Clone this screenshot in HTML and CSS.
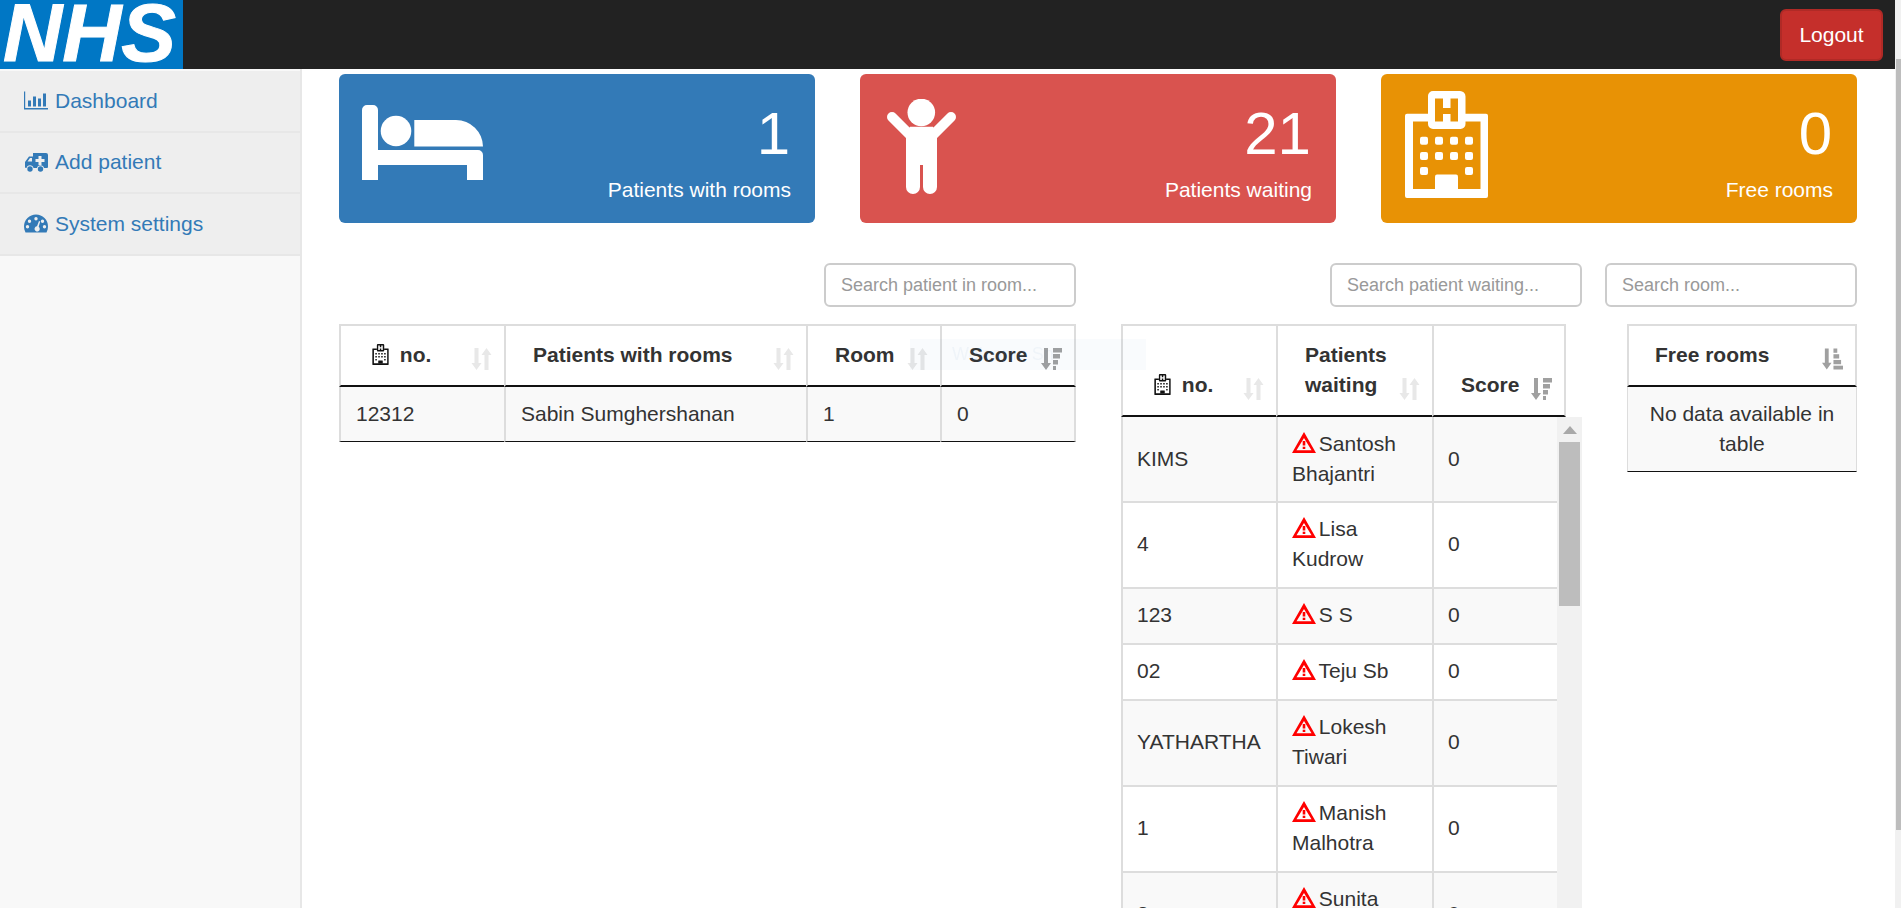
FILE: index.html
```html
<!DOCTYPE html>
<html lang="en">
<head>
    <meta charset="UTF-8">
    <title>NHS Dashboard</title>
    <link rel="stylesheet" href="styles.css">
</head>
<body>
    <svg class="defs" width="0" height="0">
        <symbol id="hospital" viewBox="0 0 83 107">
            <path d="M2 22.7H23V30.5H8V98H75.5V30.5H60V22.7H81a2 2 0 0 1 2 2V105a2 2 0 0 1-2 2H2a2 2 0 0 1-2-2V24.7a2 2 0 0 1 2-2Z"/>
            <path fill-rule="evenodd" d="M28 0H55a5.5 5.5 0 0 1 5.5 5.5V33a5 5 0 0 1-5 5H28a5 5 0 0 1-5-5V5a5 5 0 0 1 5-5ZM30 7.5V30.5H38V23H45.5V30.5H53V7.5H45.5V17H38V7.5Z"/>
            <rect x="30" y="83.6" width="23" height="16" rx="2"/>
            <rect x="15" y="45.7" width="8" height="8" rx="2"/><rect x="30" y="45.7" width="8" height="8" rx="2"/><rect x="45" y="45.7" width="8" height="8" rx="2"/><rect x="60" y="45.7" width="8" height="8" rx="2"/>
            <rect x="15" y="61" width="8" height="8" rx="2"/><rect x="30" y="61" width="8" height="8" rx="2"/><rect x="45" y="61" width="8" height="8" rx="2"/><rect x="60" y="61" width="8" height="8" rx="2"/>
            <rect x="15" y="76" width="8" height="8" rx="2"/><rect x="60" y="76" width="8" height="8" rx="2"/>
        </symbol>
        <symbol id="sort" viewBox="0 0 20 22">
            <path d="M3 0H7V15H10L5 22L0 15H3ZM15 0L20 7H17V22H13V7H10Z"/>
        </symbol>
        <symbol id="sort-desc" viewBox="0 0 21 22">
            <path d="M3 0H7V15H10L5 22L0 15H3Z"/>
            <rect x="12" y="0" width="9" height="4.500"/><rect x="12" y="6" width="7" height="4.500"/><rect x="12" y="12" width="5" height="4.500"/><rect x="12" y="18" width="3" height="4"/>
        </symbol>
        <symbol id="sort-asc" viewBox="0 0 22 22">
            <path d="M3 0H7V15H10L5 22L0 15H3Z"/>
            <rect x="12" y="0" width="4" height="4.500"/><rect x="12" y="6" width="6" height="4.500"/><rect x="12" y="12" width="8" height="4.500"/><rect x="12" y="18" width="10" height="4"/>
        </symbol>
        <symbol id="warn" viewBox="0 0 24 21">
            <path fill-rule="evenodd" d="M12 0L24 21H0ZM12 6L4.500 18.300H19.500Z"/>
            <rect x="10.700" y="9" width="2.600" height="4.500"/><rect x="10.700" y="14.700" width="2.600" height="2.300"/>
        </symbol>
    </svg>

    <nav class="navbar">
        <a class="logo">NHS</a>
        <button class="logout">Logout</button>
    </nav>

    <div class="layout">
        <aside class="sidebar">
            <a class="side-item">
                <svg class="side-icon" viewBox="0 0 24 18"><path d="M0 0H1.2V16.6H24V18H0Z"/><rect x="4" y="9" width="3" height="6"/><rect x="9" y="5" width="3" height="10"/><rect x="14" y="7" width="3" height="8"/><rect x="19" y="2" width="3" height="13"/></svg>
                Dashboard
            </a>
            <a class="side-item">
                <svg class="side-icon" viewBox="0 0 24 19"><path fill-rule="evenodd" d="M9 0H22a2 2 0 0 1 2 2V14a1 1 0 0 1-1 1H20a3.6 3.6 0 0 0-7 0H9.500a3.600 3.600 0 0 0-7 0H2a1 1 0 0 1-1-1V9L5 3.500H9ZM8 5H6L3.500 8.500H8ZM14.500 3V6H11.500V9H14.500V12H17.500V9H20.500V6H17.500V3Z"/><circle cx="6" cy="16" r="2.700"/><circle cx="16.500" cy="16" r="2.700"/></svg>
                Add patient
            </a>
            <a class="side-item">
                <svg class="side-icon" viewBox="0 0 24 18"><path fill-rule="evenodd" d="M12 0A12 12 0 0 1 24 12C24 14 23.500 16 22.500 18H1.500C0.500 16 0 14 0 12A12 12 0 0 1 12 0ZM12 2.500a1.700 1.700 0 1 0 0 3.400a1.700 1.700 0 0 0 0-3.400ZM5.500 5a1.700 1.700 0 1 0 0 3.400a1.700 1.700 0 0 0 0-3.400ZM3.500 10.500a1.700 1.700 0 1 0 0 3.400a1.700 1.700 0 0 0 0-3.400ZM18.500 5a1.700 1.700 0 1 0 0 3.400a1.700 1.700 0 0 0 0-3.400ZM20.500 10.500a1.700 1.700 0 1 0 0 3.400a1.700 1.700 0 0 0 0-3.400ZM15 6.500L13 11.800a2.600 2.600 0 1 0 1.700 0.500L16.200 7Z"/></svg>
                System settings
            </a>
        </aside>

        <main class="content">
            <section class="cards">
                <div class="card card-blue">
                    <svg class="card-icon icon-bed" viewBox="0 0 121 75" fill="currentColor">
                        <path d="M5 0H11a5 5 0 0 1 5 5V45H116a5 5 0 0 1 5 5V75H105V60H16V75H0V5a5 5 0 0 1 5-5Z"/>
                        <circle cx="34" cy="26" r="15.300"/>
                        <path d="M52.300 15H94a27 27 0 0 1 27 26.500V41.500H52.300Z"/>
                    </svg>
                    <div class="card-text">
                        <div class="card-num">1</div>
                        <div class="card-label">Patients with rooms</div>
                    </div>
                </div>
                <div class="card card-red">
                    <svg class="card-icon icon-person" viewBox="0 0 69 95" fill="currentColor">
                        <circle cx="34.300" cy="13.500" r="13.800"/>
                        <path d="M23 27.700H46L50 35V88a7 7 0 0 1-14 0V66H33V88a7 7 0 0 1-14 0V35Z"/>
                        <path d="M5 18L23 36M64 18L46 36" stroke="currentColor" stroke-width="10" stroke-linecap="round" fill="none"/>
                    </svg>
                    <div class="card-text">
                        <div class="card-num">21</div>
                        <div class="card-label">Patients waiting</div>
                    </div>
                </div>
                <div class="card card-orange">
                    <svg class="card-icon icon-hospital" fill="currentColor"><use href="#hospital"/></svg>
                    <div class="card-text">
                        <div class="card-num">0</div>
                        <div class="card-label">Free rooms</div>
                    </div>
                </div>
            </section>

            <section class="panels">
                <div class="panel panel-rooms">
                    <input class="search" type="text" placeholder="Search patient in room...">
                    <table class="grid">
                        <colgroup><col class="w165"><col class="w302"><col class="w134"><col class="w136"></colgroup>
                        <thead>
                            <tr>
                                <th><svg class="th-icon"><use href="#hospital"/></svg> no.<svg class="sort"><use href="#sort"/></svg></th>
                                <th>Patients with rooms<svg class="sort"><use href="#sort"/></svg></th>
                                <th>Room<svg class="sort"><use href="#sort"/></svg></th>
                                <th class="edge">Score<svg class="sort active"><use href="#sort-desc"/></svg></th>
                            </tr>
                        </thead>
                        <tbody>
                            <tr class="odd last">
                                <td>12312</td>
                                <td>Sabin Sumghershanan</td>
                                <td>1</td>
                                <td class="edge">0</td>
                            </tr>
                        </tbody>
                    </table>
                </div>

                <div class="panel panel-waiting">
                    <input class="search" type="text" placeholder="Search patient waiting...">
                    <table class="grid head-waiting">
                        <colgroup><col class="w155"><col class="w156"><col class="w134"></colgroup>
                        <thead>
                            <tr>
                                <th><svg class="th-icon"><use href="#hospital"/></svg> no.<svg class="sort"><use href="#sort"/></svg></th>
                                <th>Patients waiting<svg class="sort"><use href="#sort"/></svg></th>
                                <th class="edge">Score<svg class="sort active"><use href="#sort-desc"/></svg></th>
                            </tr>
                        </thead>
                    </table>
                    <div class="scroll-body">
                        <table class="grid body-waiting">
                            <colgroup><col class="w155"><col class="w156"><col class="w125"></colgroup>
                            <tbody>
                                <tr class="odd"><td>KIMS</td><td><svg class="warn"><use href="#warn"/></svg> Santosh Bhajantri</td><td>0</td></tr>
                                <tr><td>4</td><td><svg class="warn"><use href="#warn"/></svg> Lisa Kudrow</td><td>0</td></tr>
                                <tr class="odd"><td>123</td><td><svg class="warn"><use href="#warn"/></svg> S S</td><td>0</td></tr>
                                <tr><td>02</td><td><svg class="warn"><use href="#warn"/></svg> Teju Sb</td><td>0</td></tr>
                                <tr class="odd"><td>YATHARTHA</td><td><svg class="warn"><use href="#warn"/></svg> Lokesh Tiwari</td><td>0</td></tr>
                                <tr><td>1</td><td><svg class="warn"><use href="#warn"/></svg> Manish Malhotra</td><td>0</td></tr>
                                <tr class="odd"><td>8</td><td><svg class="warn"><use href="#warn"/></svg> Sunita<br>&nbsp;</td><td>0</td></tr>
                            </tbody>
                        </table>
                        <div class="scrollbar">
                            <div class="scroll-up"></div>
                            <div class="scroll-thumb"></div>
                        </div>
                    </div>
                </div>

                <div class="panel panel-free">
                    <input class="search" type="text" placeholder="Search room...">
                    <table class="grid table-free">
                        <thead>
                            <tr><th class="edge">Free rooms<svg class="sort active"><use href="#sort-asc"/></svg></th></tr>
                        </thead>
                        <tbody>
                            <tr class="odd last"><td class="empty">No data available in table</td></tr>
                        </tbody>
                    </table>
                </div>
            </section>
        </main>
    </div>

    <div class="toast">Welcome Sn</div>
    <div class="page-scrollbar"><div class="page-thumb"></div></div>
</body>
</html>
```

FILE: styles.css
```css
* {
    box-sizing: border-box;
}
html, body {
    height: 100%;
    overflow: hidden;
}
body {
    margin: 0;
    font-family: "Liberation Sans", Arial, sans-serif;
    font-size: 21px;
    line-height: 30px;
    color: #333;
    background: #fff;
}
.defs {
    position: absolute;
}

/* top bar */
.navbar {
    height: 69px;
    background: #222;
    display: flex;
    justify-content: space-between;
    align-items: center;
    padding-right: 18px;
}
.logo {
    width: 183px;
    height: 69px;
    padding-right: 4px;
    background: #0077c5;
    color: #fff;
    font-size: 82px;
    font-weight: bold;
    font-style: italic;
    line-height: 65px;
    text-align: center;
    -webkit-text-stroke: 1px #fff;
}
.logout {
    width: 103px;
    height: 52px;
    background: #c52f2b;
    border: 2px solid #b02a26;
    border-radius: 6px;
    color: #fff;
    font: inherit;
}

/* sidebar + main */
.layout {
    display: flex;
    height: 839px;
}
.sidebar {
    width: 302px;
    flex-shrink: 0;
    padding-top: 2px;
    background: #f8f8f8;
    border-right: 2px solid #e7e7e7;
}
.side-item {
    display: flex;
    align-items: center;
    gap: 7px;
    height: 61.500px;
    padding-left: 24px;
    background: #eee;
    border-bottom: 2px solid #e7e7e7;
    color: #337ab7;
}
.side-icon {
    width: 24px;
    height: 19px;
    fill: #337ab7;
}
.content {
    flex: 1;
    padding: 5px 44px 0 37px;
}

/* stat cards */
.cards {
    display: grid;
    grid-template-columns: repeat(3, 476px);
    gap: 45px;
}
.card {
    height: 149px;
    display: flex;
    justify-content: space-between;
    align-items: flex-start;
    padding: 27px 24px 0 23px;
    border-radius: 6px;
    color: #fff;
}
.card-blue {
    background: #337ab7;
}
.card-red {
    background: #d9534f;
}
.card-orange {
    background: #e89205;
}
.card-text {
    text-align: right;
}
.card-num {
    padding-right: 1px;
    font-size: 60px;
    line-height: 66px;
}
.card-label {
    margin-top: 8px;
}
.icon-bed {
    width: 121px;
    height: 75px;
    margin-top: 4px;
}
.icon-person {
    width: 69px;
    height: 95px;
    margin: -2px 0 0 4px;
}
.icon-hospital {
    width: 83px;
    height: 107px;
    margin: -10px 0 0 1px;
}

/* tables */
.panels {
    display: flex;
    margin-top: 40px;
}
.panel {
    display: flex;
    flex-direction: column;
}
.panel-rooms {
    width: 737px;
    margin-right: 45px;
}
.panel-waiting {
    width: 461px;
    margin-right: 23px;
}
.panel-free {
    width: 252px;
}
.search {
    align-self: flex-end;
    width: 252px;
    height: 44px;
    margin-bottom: 17px;
    padding: 0 15px;
    border: 2px solid #ccc;
    border-radius: 6px;
    font-family: inherit;
    font-size: 18px;
}
.search::placeholder {
    color: #999;
}
.grid {
    width: 100%;
    table-layout: fixed;
    border-collapse: separate;
    border-spacing: 0;
}
.w165 { width: 165px; }
.w302 { width: 302px; }
.w134 { width: 134px; }
.w136 { width: 136px; }
.w155 { width: 155px; }
.w156 { width: 156px; }
.w125 { width: 125px; }
.grid th {
    position: relative;
    padding: 14px 45px 15px 27px;
    border-top: 2px solid #ddd;
    border-left: 2px solid #ddd;
    border-bottom: 2px solid #111;
    text-align: left;
    vertical-align: bottom;
}
.grid td {
    padding: 12px 12px 12px 15px;
    border-left: 2px solid #ddd;
    vertical-align: middle;
}
.grid .edge {
    border-right: 2px solid #ddd;
}
.odd td {
    background: #f9f9f9;
}
.last td {
    border-bottom: 1px solid #111;
}
.th-icon {
    width: 17px;
    height: 21px;
    fill: #111;
    vertical-align: -3px;
    margin-left: 4px;
    margin-right: 5px;
}
.sort {
    position: absolute;
    right: 12px;
    bottom: 15px;
    width: 21px;
    height: 22px;
    fill: #e8e8e8;
}
.sort.active {
    fill: #a0a0a0;
}
.warn {
    width: 24px;
    height: 21px;
    margin-right: -3px;
    fill: #f00;
    vertical-align: -2px;
}

.head-waiting {
    width: 445px;
}
.scroll-body {
    display: flex;
    align-items: flex-start;
    height: 491px;
    overflow: hidden;
}
.body-waiting {
    width: 436px;
    flex-shrink: 0;
}
.body-waiting td {
    padding: 11px 12px 13px 14px;
    border-bottom: 2px solid #ddd;
}
.body-waiting tr:first-child td {
    padding-top: 12px;
    padding-bottom: 12px;
}
.scrollbar {
    width: 25px;
    height: 100%;
    padding: 0 2px;
    background: #f1f1f1;
}
.scroll-up {
    width: 0;
    height: 25px;
    margin: 0 auto;
    border: solid transparent;
    border-width: 9px 7px 0;
    position: relative;
}
.scroll-up::before {
    content: "";
    position: absolute;
    top: 0;
    left: -7px;
    border: solid transparent;
    border-width: 0 7px 8px;
    border-bottom-color: #a8a8a8;
}
.scroll-thumb {
    height: 164px;
    background: #bdbdbd;
}

.table-free {
    width: 230px;
    margin-left: 22px;
}
.table-free th {
    padding-left: 26px;
}
.table-free .empty {
    padding: 12px 14px 12px;
    border-left-width: 1px;
    border-right: 1px solid #ddd;
    text-align: center;
}

/* fading welcome note over the header row */
.toast {
    position: fixed;
    left: 910px;
    top: 339px;
    width: 236px;
    height: 31px;
    padding-left: 42px;
    font-size: 18px;
    color: rgba(51, 122, 183, 0.05);
    background: rgba(51, 122, 183, 0.03);
}

/* browser scrollbar of the page */
.page-scrollbar {
    position: fixed;
    top: 0;
    right: 0;
    width: 6px;
    height: 100%;
    padding: 59px 0 0 1px;
    background: #f1f1f1;
}
.page-thumb {
    height: 771px;
    background: #bdbdbd;
}
```
